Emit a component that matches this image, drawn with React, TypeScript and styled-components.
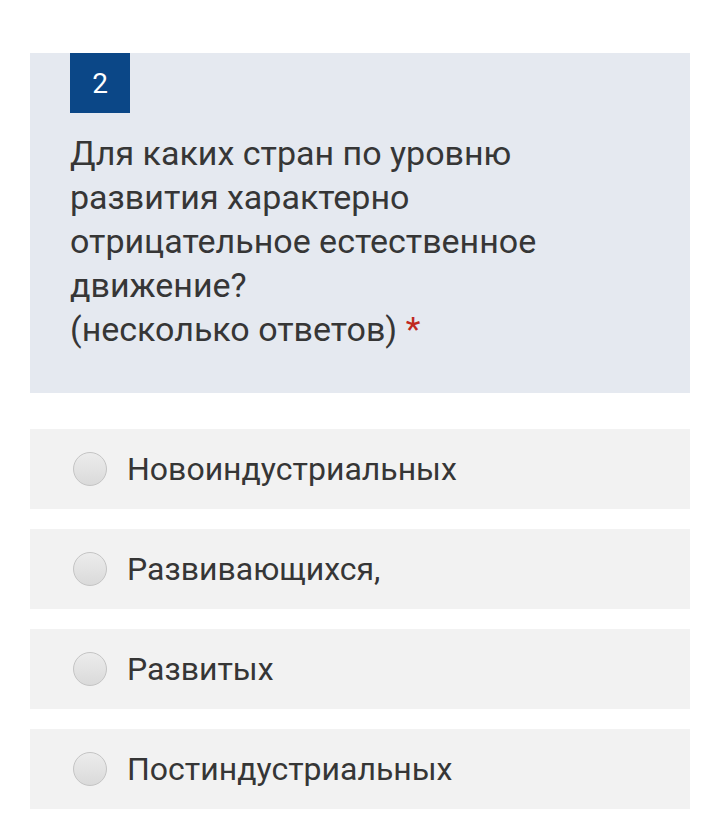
import styled, { createGlobalStyle } from "styled-components";

const options = [
  "Новоиндустриальных",
  "Развивающихся,",
  "Развитых",
  "Постиндустриальных",
];

const GlobalStyle = createGlobalStyle`
  body {
    margin: 0;
    background: #ffffff;
    font-family: Roboto, "Liberation Sans", sans-serif;
  }
`;

function App() {
  return (
    <>
      <GlobalStyle />
      <StyledPage>
        <StyledQuestion>
          <StyledBadge>2</StyledBadge>
          <StyledTitle>
            Для каких стран по уровню развития характерно отрицательное
            естественное движение?
            <br />
            (несколько ответов) <StyledRequired>*</StyledRequired>
          </StyledTitle>
        </StyledQuestion>
        <StyledList>
          {options.map((option) => (
            <StyledOption key={option}>
              <StyledRadio />
              <StyledLabel>{option}</StyledLabel>
            </StyledOption>
          ))}
        </StyledList>
      </StyledPage>
    </>
  );
}

export default App;

const StyledPage = styled.div`
  width: 660px;
  padding: 53px 30px 16px;
  display: flex;
  flex-direction: column;
  gap: 36px;
`;
const StyledQuestion = styled.div`
  background: #e5e9f0;
  padding: 0 40px 42px;
  display: flex;
  flex-direction: column;
  align-items: flex-start;
  gap: 18px;
`;
const StyledBadge = styled.div`
  width: 60px;
  height: 60px;
  background: #0b4787;
  color: #ffffff;
  font-size: 28px;
  display: flex;
  align-items: center;
  justify-content: center;
`;
const StyledTitle = styled.div`
  font-size: 34px;
  line-height: 44px;
  color: #363636;
`;
const StyledRequired = styled.span`
  color: #c0281f;
`;
const StyledList = styled.div`
  display: flex;
  flex-direction: column;
  gap: 20px;
`;
const StyledOption = styled.div`
  height: 80px;
  background: #f2f2f2;
  display: flex;
  align-items: center;
  padding-left: 43px;
  gap: 20px;
`;
const StyledRadio = styled.span`
  width: 32px;
  height: 32px;
  border-radius: 50%;
  border: 1px solid #c4c4c4;
  background: linear-gradient(#ececec, #dadada);
  flex-shrink: 0;
`;
const StyledLabel = styled.span`
  font-size: 32px;
  color: #363636;
`;
